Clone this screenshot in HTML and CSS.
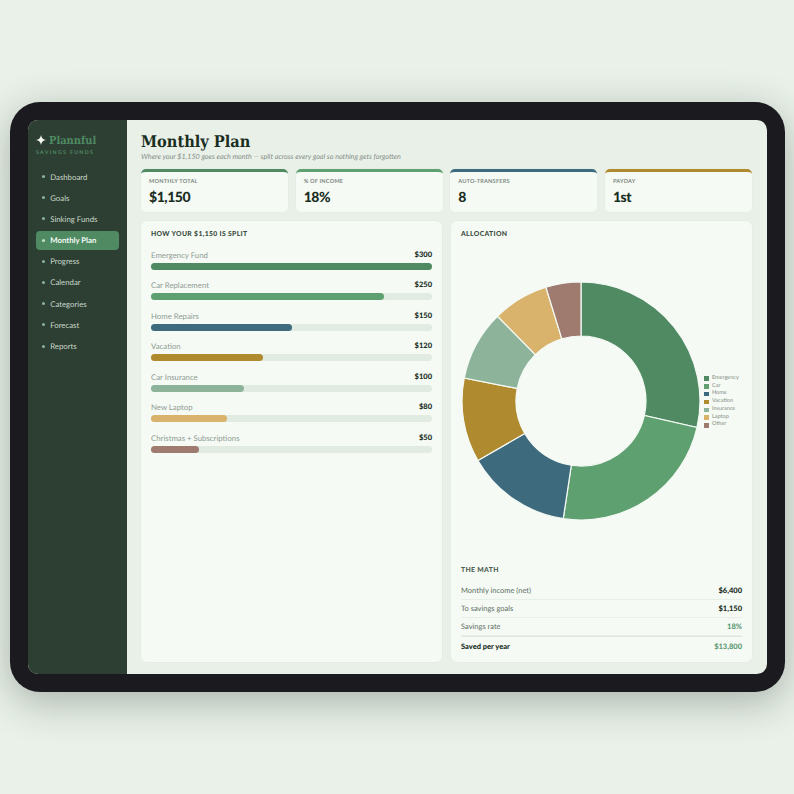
FILE: index.html
```html
<!DOCTYPE html>
<html lang="en">
<head>
<meta charset="utf-8">
<title>Plannful – Monthly Plan</title>
<link rel="stylesheet" href="styles.css">
</head>
<body>
<div class="tablet">
  <div class="screen">
    <aside class="sidebar">
      <div class="brand">
        <svg class="brand-star" viewBox="0 0 10 10" width="10" height="10"><path d="M5 0C5.5 3 7 4.5 10 5C7 5.5 5.5 7 5 10C4.5 7 3 5.5 0 5C3 4.5 4.5 3 5 0Z"/></svg>
        <span class="brand-name">Plannful</span>
      </div>
      <div class="brand-sub">SAVINGS FUNDS</div>
      <nav class="nav">
        <a class="nav-item"><i class="dot"></i>Dashboard</a>
        <a class="nav-item"><i class="dot"></i>Goals</a>
        <a class="nav-item"><i class="dot"></i>Sinking Funds</a>
        <a class="nav-item active"><i class="dot"></i>Monthly Plan</a>
        <a class="nav-item"><i class="dot"></i>Progress</a>
        <a class="nav-item"><i class="dot"></i>Calendar</a>
        <a class="nav-item"><i class="dot"></i>Categories</a>
        <a class="nav-item"><i class="dot"></i>Forecast</a>
        <a class="nav-item"><i class="dot"></i>Reports</a>
      </nav>
    </aside>
    <main class="main">
      <h1 class="title">Monthly Plan</h1>
      <p class="subtitle">Where your $1,150 goes each month — split across every goal so nothing gets forgotten</p>
      <section class="stats">
        <div class="stat c-green"><div class="stat-label">MONTHLY TOTAL</div><div class="stat-value">$1,150</div></div>
        <div class="stat c-mid"><div class="stat-label">% OF INCOME</div><div class="stat-value">18%</div></div>
        <div class="stat c-blue"><div class="stat-label">AUTO-TRANSFERS</div><div class="stat-value">8</div></div>
        <div class="stat c-gold"><div class="stat-label">PAYDAY</div><div class="stat-value">1st</div></div>
      </section>
      <section class="panels">
        <div class="panel">
          <h2 class="panel-title">HOW YOUR $1,150 IS SPLIT</h2>
          <div class="bars">
            <div class="bar-row"><div class="bar-head"><span>Emergency Fund</span><b>$300</b></div><div class="track"><div class="fill f1" style="width:100%"></div></div></div>
            <div class="bar-row"><div class="bar-head"><span>Car Replacement</span><b>$250</b></div><div class="track"><div class="fill f2" style="width:83%"></div></div></div>
            <div class="bar-row"><div class="bar-head"><span>Home Repairs</span><b>$150</b></div><div class="track"><div class="fill f3" style="width:50%"></div></div></div>
            <div class="bar-row"><div class="bar-head"><span>Vacation</span><b>$120</b></div><div class="track"><div class="fill f4" style="width:40%"></div></div></div>
            <div class="bar-row"><div class="bar-head"><span>Car Insurance</span><b>$100</b></div><div class="track"><div class="fill f5" style="width:33%"></div></div></div>
            <div class="bar-row"><div class="bar-head"><span>New Laptop</span><b>$80</b></div><div class="track"><div class="fill f6" style="width:27%"></div></div></div>
            <div class="bar-row"><div class="bar-head"><span>Christmas + Subscriptions</span><b>$50</b></div><div class="track"><div class="fill f7" style="width:17%"></div></div></div>
          </div>
        </div>
        <div class="panel panel-right">
          <h2 class="panel-title">ALLOCATION</h2>
          <div class="chart">
            <svg class="donut" viewBox="-120 -120 240 240" width="240" height="240">
              <g stroke="#f5faf5" stroke-width="1.2">
                <path class="s1" d="M0 -119A119 119 0 0 1 116.02 26.48L63.37 14.46A65 65 0 0 0 0 -65Z"/>
                <path class="s2" d="M116.02 26.48A119 119 0 0 1 -17.74 117.67L-9.69 64.27A65 65 0 0 0 63.37 14.46Z"/>
                <path class="s3" d="M-17.74 117.67A119 119 0 0 1 -103.06 59.5L-56.29 32.5A65 65 0 0 0 -9.69 64.27Z"/>
                <path class="s4" d="M-103.06 59.5A119 119 0 0 1 -116.76 -22.99L-63.78 -12.56A65 65 0 0 0 -56.29 32.5Z"/>
                <path class="s5" d="M-116.76 -22.99A119 119 0 0 1 -83.52 -84.77L-45.62 -46.3A65 65 0 0 0 -63.78 -12.56Z"/>
                <path class="s6" d="M-83.52 -84.77A119 119 0 0 1 -35.08 -113.71L-19.16 -62.11A65 65 0 0 0 -45.62 -46.3Z"/>
                <path class="s7" d="M-35.08 -113.71A119 119 0 0 1 0 -119L0 -65A65 65 0 0 0 -19.16 -62.11Z"/>
              </g>
            </svg>
            <ul class="legend">
              <li><i class="f1"></i>Emergency</li>
              <li><i class="f2"></i>Car</li>
              <li><i class="f3"></i>Home</li>
              <li><i class="f4"></i>Vacation</li>
              <li><i class="f5"></i>Insurance</li>
              <li><i class="f6"></i>Laptop</li>
              <li><i class="f7"></i>Other</li>
            </ul>
          </div>
          <h2 class="panel-title math-title">THE MATH</h2>
          <div class="math">
            <div class="math-row"><span>Monthly income (net)</span><b>$6,400</b></div>
            <div class="math-row"><span>To savings goals</span><b>$1,150</b></div>
            <div class="math-row"><span>Savings rate</span><b class="pos">18%</b></div>
            <div class="math-row total"><span>Saved per year</span><b class="pos">$13,800</b></div>
          </div>
        </div>
      </section>
    </main>
  </div>
</div>
</body>
</html>
```
FILE: styles.css
```css
* { box-sizing: border-box; }
html, body { margin: 0; height: 100%; }
body {
  background: #e9f1e9;
  font-family: "Lato", "Open Sans", sans-serif;
  text-rendering: geometricPrecision;
  padding: 102px 9px 0 10px;
  overflow: hidden;
}
.tablet {
  width: 775px;
  height: 590px;
  padding: 18px;
  background: #1a1a1f;
  border-radius: 30px;
  box-shadow: 0 10px 40px rgba(30, 45, 35, .32);
}
.screen {
  display: flex;
  height: 100%;
  border-radius: 10px;
  overflow: hidden;
  background: #e9f0e8;
}
.sidebar {
  width: 99px;
  flex: none;
  background: #2d3f32;
  padding: 13px 8px 0;
}
.brand { display: flex; align-items: center; gap: 3px; height: 14px; }
.brand-star { fill: #f5faf5; flex: none; }
.brand-name {
  color: #4f8a63;
  font-family: "DejaVu Serif Condensed", "DejaVu Serif", serif;
  font-weight: 700;
  font-size: 11px;
}
.brand-sub {
  color: #4f8a63;
  font-size: 5.2px;
  font-weight: 700;
  letter-spacing: 1.35px;
  line-height: 8px;
  margin-top: 2px;
}
.nav { display: flex; flex-direction: column; gap: 2.2px; margin-top: 10px; }
.nav-item {
  display: flex;
  align-items: center;
  height: 19px;
  padding-left: 6px;
  border-radius: 4px;
  color: #c9d8cc;
  font-size: 7.8px;
}
.nav-item .dot {
  width: 3px;
  height: 3px;
  border-radius: 50%;
  background: #8db39b;
  margin-right: 5.2px;
}
.nav-item.active { background: #4f8a63; color: #f5faf5; font-weight: 700; }
.nav-item.active .dot { background: #c9e0cf; }
.main {
  flex: 1;
  min-width: 0;
  display: flex;
  flex-direction: column;
  padding: 11px 15px 12px 14px;
}
.title {
  margin: 0;
  font-family: "DejaVu Serif Condensed", "DejaVu Serif", serif;
  font-weight: 700;
  font-size: 16.2px;
  line-height: 21px;
  color: #1a2e1f;
}
.subtitle {
  margin: 0;
  font-size: 7.2px;
  font-style: italic;
  line-height: 10px;
  color: #858f88;
}
.stats {
  display: grid;
  grid-template-columns: repeat(4, 1fr);
  gap: 7.5px;
  margin-top: 7px;
}
.stat {
  height: 43px;
  padding: 6px 8px 0;
  background: #f5faf5;
  border-radius: 5px;
  border-top: 3px solid;
  box-shadow: 0 0 0 .5px #e2ebe2;
}
.c-green { border-top-color: #4f8a63; }
.c-mid { border-top-color: #5fa070; }
.c-blue { border-top-color: #3d6b7d; }
.c-gold { border-top-color: #b08a2e; }
.stat-label { font-size: 5.6px; font-weight: 700; line-height: 8px; color: #7f8a82; letter-spacing: .2px; }
.stat-value { font-size: 14px; font-weight: 900; line-height: 18px; margin-top: 2px; letter-spacing: -.45px; color: #1a2e1f; }
.panels {
  flex: 1;
  min-height: 0;
  display: grid;
  grid-template-columns: 1fr 1fr;
  gap: 9px;
  margin-top: 9px;
}
.panel {
  display: flex;
  flex-direction: column;
  padding: 9px 10px 0;
  background: #f5faf5;
  border-radius: 6px;
  box-shadow: 0 0 0 .5px #e2ebe2;
}
.panel-title {
  margin: 0;
  font-size: 6.8px;
  font-weight: 900;
  line-height: 9px;
  letter-spacing: .35px;
  color: #3a4d40;
}
.bars { display: flex; flex-direction: column; gap: 10.45px; margin-top: 11px; }
.bar-head {
  display: flex;
  justify-content: space-between;
  font-size: 7.8px;
  line-height: 10px;
  color: #8f9a92;
}
.bar-head b { color: #1a2e1f; font-size: 7.5px; font-weight: 900; }
.track { height: 7px; margin-top: 3px; background: #e2ebe2; border-radius: 4px; }
.fill { height: 100%; border-radius: 4px; }
.f1 { background: #4f8a63; }
.f2 { background: #5fa070; }
.f3 { background: #3d6b7d; }
.f4 { background: #b08a2e; }
.f5 { background: #8db39b; }
.f6 { background: #d9b36c; }
.f7 { background: #9e7b6e; }
.s1 { fill: #4f8a63; }
.s2 { fill: #5fa070; }
.s3 { fill: #3d6b7d; }
.s4 { fill: #b08a2e; }
.s5 { fill: #8db39b; }
.s6 { fill: #d9b36c; }
.s7 { fill: #9e7b6e; }
.chart {
  height: 240px;
  margin: 42px 0 0;
  display: flex;
  align-items: center;
}
.donut { flex: none; display: block; }
.legend {
  list-style: none;
  margin: 2px 0 0 3px;
  padding: 0;
  font-size: 5.5px;
  line-height: 7.8px;
  color: #7f8a82;
}
.legend li { display: flex; align-items: center; }
.legend i { width: 4.5px; height: 4.5px; margin-right: 3.5px; }
.math-title { margin-top: 45px; color: #4d5f53; }
.math { margin-top: 7px; }
.math-row {
  display: flex;
  justify-content: space-between;
  align-items: center;
  height: 18px;
  font-size: 7.5px;
  color: #5e6e63;
  border-bottom: .5px solid #e8efe8;
}
.math-row b { color: #1a2e1f; font-weight: 900; }
.math-row .pos { color: #5f9a75; }
.math-row.total {
  height: 19px;
  border-bottom: 0;
  border-top: 1.5px solid #dfe8df;
  color: #1a2e1f;
  font-weight: 900;
}
```
